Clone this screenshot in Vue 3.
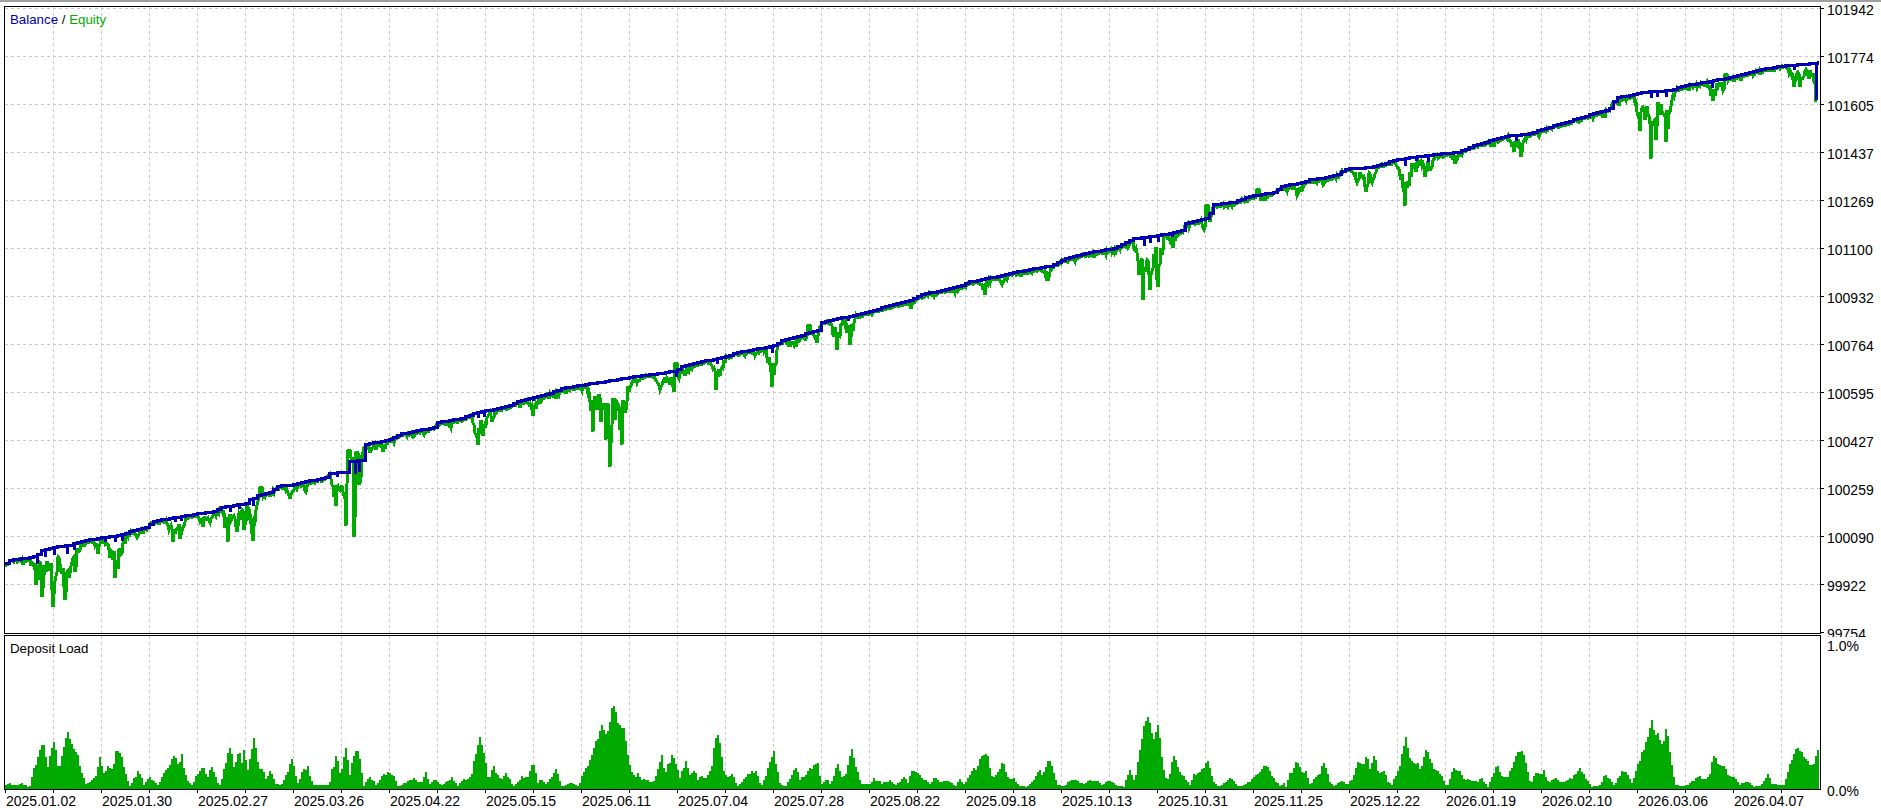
<script setup>
// balance curve, page pixels [x, y]
const balance = [
  [5,563],[10,559],[24,558],[33,556],[37,554],[39,550],[48,548],[59,546],[69,545],[74,543],[90,539],[102,537],[124,534],[131,530],[147,527],[151,521],[163,519],[192,514],[214,511],[220,507],[245,503],[247,499],[255,498],[257,495],[271,492],[275,486],[294,484],[300,482],[326,477],[328,473],[345,472],[347,461],[361,460],[362,445],[392,438],[398,434],[433,427],[437,422],[461,418],[473,413],[510,405],[514,402],[543,395],[561,388],[592,383],[640,375],
  [660,373],[676,370],[679,367],[701,361],[717,358],[738,352],[775,345],[781,340],[801,335],[803,333],[818,330],[820,322],[852,315],[866,312],[885,306],[909,300],[922,294],[962,285],[966,282],[991,277],[1024,270],[1052,265],[1064,258],[1089,252],[1113,248],[1134,238],[1158,235],[1183,230],[1185,223],[1207,218],[1213,204],[1232,202],[1248,196],[1273,192],[1280,186],
  [1301,182],[1310,179],[1326,177],[1339,174],[1342,169],[1369,167],[1398,159],[1417,156],[1434,154],[1457,152],[1473,145],[1494,139],[1509,135],[1526,134],[1551,126],[1587,115],[1610,108],[1614,98],[1637,93],[1641,92],[1669,90],[1684,85],[1710,81],[1737,75],[1760,69],[1784,65],[1805,64],[1817,62],
];

// lowest points the equity reached
const equityDips = [
  [36,585],[39,575],[42,597],[45,563],[48,565],[52,590],[53,607],[57,550],[60,560],[65,600],[69,578],[75,572],[80,548],
  [98,554],[110,558],[115,578],[118,569],[122,553],[137,538],[169,530],[173,542],[180,539],[203,527],[210,523],
  [228,542],[237,532],[244,530],[253,541],[290,499],[306,492],[336,506],[340,490],[346,526],[350,510],[354,537],[358,493],
  [370,453],[383,452],[413,437],[424,435],[451,428],[478,445],[483,436],[492,422],[520,408],[533,416],[540,404],[556,399],
  [593,432],[597,410],[601,422],[606,440],[610,467],[615,420],[620,430],[622,445],[626,410],[629,392],[637,383],
  [660,390],[666,383],[670,385],[675,398],[685,376],[692,369],[716,390],[720,376],[745,356],[755,356],[772,387],[790,347],[796,347],[806,339],[817,343],
  [837,350],[850,345],[873,313],[911,309],[936,295],[948,289],[985,295],[1002,285],[1032,273],[1047,281],[1068,262],[1089,256],
  [1128,248],[1139,275],[1143,300],[1146,270],[1150,290],[1153,268],[1158,287],[1173,248],[1207,236],[1232,207],[1265,201],
  [1287,192],[1297,196],[1301,192],[1317,183],[1324,184],[1357,183],[1362,176],[1366,192],[1372,183],
  [1401,180],[1405,206],[1409,186],[1416,172],[1425,177],[1430,171],[1455,164],[1494,147],[1514,152],[1521,157],[1539,137],[1566,125],[1579,122],[1605,115],[1619,106],
  [1640,131],[1645,120],[1651,159],[1656,140],[1660,115],[1666,142],[1670,112],[1713,101],[1723,91],[1735,80],
  [1794,87],[1800,87],[1804,76],[1809,79],[1816,102],
];

// equity above balance
const equityPeaks = [[261,487],[349,450],[352,458],[357,452],[676,363],[809,325],[1207,205],[1258,189],[1726,74]];

// small blue drops on the balance line
const balanceDrops = [
  [37,10],[45,8],[54,8],[67,9],[74,7],[105,5],[115,7],[122,7],[175,5],[181,5],[230,7],[239,5],[253,8],[337,5],[355,14],[359,12],[478,6],[484,6],[533,4],
  [676,7],[717,6],[772,7],[848,5],[1144,9],[1150,7],[1158,7],[1172,5],
  [1405,8],[1416,5],[1428,7],[1516,6],[1651,7],[1657,6],[1666,7],[1712,7],[1794,5],
];

// deposit load tops, read in three strips: [x, y] of the strip
const loadStrip1 = [[10,290],[20,276],[30,288],[50,278],[70,292],[78,250],[88,215],[103,148],[115,230],[130,150],[142,240],[163,118],[175,170],[186,184],[195,240],[210,285],[220,275],[232,260],[243,202],[253,255],[263,220],[270,250],[282,186],[292,186],[305,250],[315,290],[325,270],[338,240],[350,285],[365,262],[385,285],[410,225],[428,192],[435,225],[443,192],[455,270],[470,285],[486,238],[500,240],[505,260],[518,235],[535,290],[545,250],[562,168],[572,240],[583,178],[590,225],[596,178],[605,240],[620,138],[632,240],[642,238],[650,265],[660,238],[675,285],[690,280],[713,213],[728,280],[740,238],[752,232],[765,285],[785,285],[805,285],[808,255],[823,195],[832,255],[845,175],[855,255],[868,175],[878,192],[888,290],[905,260],[920,285],[940,250],[965,258],[970,290],[990,280],[1010,265],[1030,280],[1042,250],[1050,285],[1060,265],[1080,287],[1105,265],[1120,290],[1130,270],[1150,265],[1173,145],[1185,190],[1195,270],[1205,228],[1225,270],[1240,250],[1255,290],[1275,262],[1290,262],[1305,220],[1315,280],[1325,265],[1335,285],[1360,240],[1375,290],[1400,278],[1415,290],[1425,255],[1440,230],[1453,175],[1472,110],[1485,140],[1500,40],[1510,88],[1525,112],[1535,180],[1545,245],[1555,265],[1562,250],[1567,270]];
const loadStrip2 = [[0,272],[8,265],[22,275],[35,270],[50,190],[60,250],[76,198],[88,222],[95,262],[112,216],[122,265],[130,238],[140,270],[150,258],[160,265],[172,240],[185,126],[195,168],[205,250],[215,265],[226,252],[235,290],[260,260],[272,243],[283,250],[295,290],[305,258],[325,178],[340,280],[355,290],[370,250],[380,235],[390,270],[405,255],[418,235],[433,216],[443,280],[455,265],[465,285],[482,216],[495,270],[505,238],[516,174],[528,238],[540,280],[560,285],[572,265],[590,280],[610,270],[625,285],[645,258],[655,280],[665,238],[690,265],[710,285],[720,258],[735,275],[760,275],[770,290],[782,265],[790,285],[810,250],[822,232],[838,195],[850,195],[860,262],[875,250],[888,216],[900,268],[915,265],[925,285],[945,290],[965,270],[974,243],[985,250],[998,202],[1010,243],[1020,285],[1040,290],[1050,270],[1065,270],[1085,285],[1102,270],[1120,275],[1130,285],[1145,270],[1165,285],[1185,290],[1190,255],[1200,243],[1210,275],[1222,190],[1235,90],[1245,85],[1255,148],[1268,96],[1280,238],[1290,275],[1307,192],[1320,250],[1335,265],[1345,285],[1355,255],[1375,235],[1388,213],[1400,265],[1412,290],[1425,285],[1450,260],[1460,290],[1480,285],[1495,270],[1510,255],[1530,222],[1545,258],[1567,290]];
const loadStrip3 = [[0,290],[8,280],[15,290],[25,252],[45,216],[55,240],[72,250],[80,285],[105,252],[123,222],[135,270],[150,290],[170,270],[185,285],[200,265],[215,207],[230,235],[240,200],[250,235],[260,195],[275,250],[290,243],[300,275],[310,285],[320,258],[330,240],[350,144],[365,215],[380,215],[390,240],[406,180],[420,213],[435,243],[450,258],[465,290],[485,232],[495,238],[510,265],[530,270],[550,275],[560,265],[580,290],[605,220],[620,265],[635,258],[650,225],[660,188],[676,183],[690,240],[700,285],[710,250],[725,250],[737,245],[750,280],[770,265],[790,280],[805,270],[825,255],[840,237],[860,275],[870,290],[895,285],[905,258],[920,265],[935,290],[950,250],[965,243],[985,280],[1005,207],[1025,150],[1040,87],[1048,140],[1055,122],[1065,175],[1080,114],[1095,230],[1105,285],[1125,290],[1145,280],[1170,255],[1190,270],[1200,250],[1213,192],[1225,222],[1240,225],[1255,260],[1275,265],[1285,285],[1305,275],[1325,290],[1345,285],[1363,252],[1375,280],[1395,285],[1410,285],[1425,230],[1440,180],[1457,180],[1470,213],[1490,225],[1505,180]];

const priceLabels = [101942, 101774, 101605, 101437, 101269, 101100, 100932, 100764, 100595, 100427, 100259, 100090, 99922, 99754];
const dates = ["2025.01.02", "2025.01.30", "2025.02.27", "2025.03.26", "2025.04.22", "2025.05.15", "2025.06.11", "2025.07.04", "2025.07.28", "2025.08.22", "2025.09.18", "2025.10.13", "2025.10.31", "2025.11.25", "2025.12.22", "2026.01.19", "2026.02.10", "2026.03.06", "2026.04.07"];

const gridX = Array.from({ length: 37 }, (_, i) => 53 + i * 48);
const gridY = Array.from({ length: 13 }, (_, i) => 8 + i * 48);

let seed = 41;
const rand = () => {
  seed = (seed * 16807) % 2147483647;
  return seed / 2147483647;
};

const lerp = (pts, x) => {
  if (x <= pts[0][0]) return pts[0][1];
  for (let i = 1; i < pts.length; i++) {
    if (x <= pts[i][0]) {
      const [x0, y0] = pts[i - 1];
      const [x1, y1] = pts[i];
      return y0 + ((y1 - y0) * (x - x0)) / (x1 - x0);
    }
  }
  return pts[pts.length - 1][1];
};

const balanceAt = (x) => Math.round(lerp(balance, x));

const buildBalance = () => {
  let d = `M5 ${balanceAt(5)}`;
  for (let x = 9; x <= 1817; x += 4) d += `H${x}V${balanceAt(x)}`;
  d += "H1816.5M1816.5 62V100";
  for (const [x, depth] of balanceDrops) {
    const y = balanceAt(x);
    d += `M${x} ${y}V${y + depth}`;
  }
  return d;
};

// one point per pixel, jumping around inside each dip so it fills in
const buildEquity = () => {
  let d = "";
  for (let x = 5; x <= 1816; x++) {
    const base = balanceAt(x);
    let depth = rand() * 2.5 + 1;
    if (rand() < 0.1) depth += rand() * 5;
    for (const [tx, ty] of equityDips) {
      const dist = Math.abs(tx - x);
      if (dist > 5) continue;
      const full = ty - balanceAt(tx);
      const v = dist === 0 ? full : full * (1 - dist / 8) * (0.3 + rand() * 0.7);
      if (v > depth) depth = v;
    }
    for (const [tx, ty] of equityPeaks) {
      if (Math.abs(tx - x) < 2) depth = ty - base;
    }
    d += `${d ? "L" : "M"}${x} ${Math.round(base + depth)}`;
  }
  return d;
};

const buildLoad = () => {
  const pts = [
    ...loadStrip1.map(([x, y]) => [x / 2.45, y]),
    ...loadStrip2.map(([x, y]) => [640 + x / 2.45, y]),
    ...loadStrip3.map(([x, y]) => [1280 + x / 2.8, y]),
  ];
  let d = "M5 789";
  for (let x = 5; x < 1818; x += 2) {
    const h = (297 - lerp(pts, x)) / 3;
    const top = 789 - Math.max(1, Math.round(h + (rand() - 0.5) * Math.min(5, h * 0.25)));
    d += `V${top}H${x + 2}`;
  }
  return `${d}V789Z`;
};

const balancePath = buildBalance();
const equityPath = buildEquity();
const loadPath = buildLoad();
</script>

<template>
  <div class="terminal">
    <section class="pane main">
      <div class="plot main-plot">
        <svg viewBox="5 7 1815 626" width="1815" height="626">
          <g class="grid">
            <line v-for="y in gridY" :key="y" x1="5" x2="1820" :y1="y + 0.5" :y2="y + 0.5" />
            <line v-for="x in gridX" :key="x" :x1="x + 0.5" :x2="x + 0.5" y1="7" y2="633" />
          </g>
          <path class="equity" :d="equityPath" />
          <path class="balance" :d="balancePath" />
        </svg>
        <div class="legend">
          <span class="blue">Balance</span> / <span class="green">Equity</span>
        </div>
      </div>
      <div class="axis price-axis">
        <div v-for="p in priceLabels" :key="p" class="price">{{ p }}</div>
      </div>
    </section>

    <section class="lower">
      <div class="plot load-plot">
        <svg viewBox="5 636 1815 153" width="1815" height="153">
          <g class="grid">
            <line v-for="x in gridX" :key="x" :x1="x + 0.5" :x2="x + 0.5" y1="636" y2="789" />
          </g>
          <path class="load" :d="loadPath" />
        </svg>
        <div class="legend">Deposit Load</div>
      </div>
      <div class="axis load-axis">
        <div>1.0%</div>
        <div>0.0%</div>
      </div>
      <div class="dates">
        <div v-for="d in dates" :key="d" class="date">{{ d }}</div>
      </div>
    </section>
  </div>
</template>

<style scoped>
.terminal {
  width: 1881px;
  height: 808px;
  box-sizing: border-box;
  border-top: 2px solid #a0a0a0;
  background: #fff;
  color: #000;
  font-family: "Liberation Sans", Arial, sans-serif;
  font-size: 14px;
  overflow: hidden;
}
.pane {
  display: flex;
  height: 635px;
  padding-left: 4px;
  overflow: hidden;
}
.plot {
  position: relative;
  box-sizing: border-box;
  width: 1817px;
  flex: none;
  border: 1px solid #000;
}
.plot svg {
  display: block;
}
.main-plot {
  height: 628px;
  margin-top: 4px;
}
.grid line {
  stroke: #c8c8c8;
  stroke-width: 1;
  stroke-dasharray: 3 3;
  shape-rendering: crispEdges;
}
.equity {
  fill: none;
  stroke: #00aa00;
  stroke-width: 3;
  shape-rendering: crispEdges;
}
.balance {
  fill: none;
  stroke: #0000b4;
  stroke-width: 3;
  shape-rendering: crispEdges;
}
.load {
  fill: #00aa00;
  shape-rendering: crispEdges;
}
.legend {
  position: absolute;
  left: 5px;
  top: 5px;
  font-size: 13.3px;
  line-height: 16px;
}
.blue {
  color: #0000b4;
}
.green {
  color: #00aa00;
}
.axis {
  line-height: 16px;
}
.price {
  position: relative;
  height: 48px;
  padding-left: 6px;
}
.price::before {
  content: "";
  position: absolute;
  left: 0;
  top: 6px;
  width: 3px;
  height: 1px;
  background: #000;
}
.lower {
  display: grid;
  grid-template-columns: 1821px 1fr;
  grid-template-rows: 153px auto;
}
.load-plot {
  height: 155px;
  margin-top: -2px;
  margin-left: 4px;
}
.load-axis {
  grid-column: 2;
  grid-row: 1 / 3;
  box-sizing: border-box;
  height: 162px;
  padding: 1px 0 0 6px;
  display: flex;
  flex-direction: column;
  justify-content: space-between;
}
.dates {
  grid-column: 1;
  grid-row: 2;
  display: flex;
  padding: 5px 0 0 6px;
  line-height: 13px;
  background: repeating-linear-gradient(to right, #000 0 1px, transparent 1px 48px) 5px 0 / 100% 3px no-repeat;
}
.date {
  width: 96px;
  flex: none;
}
</style>
